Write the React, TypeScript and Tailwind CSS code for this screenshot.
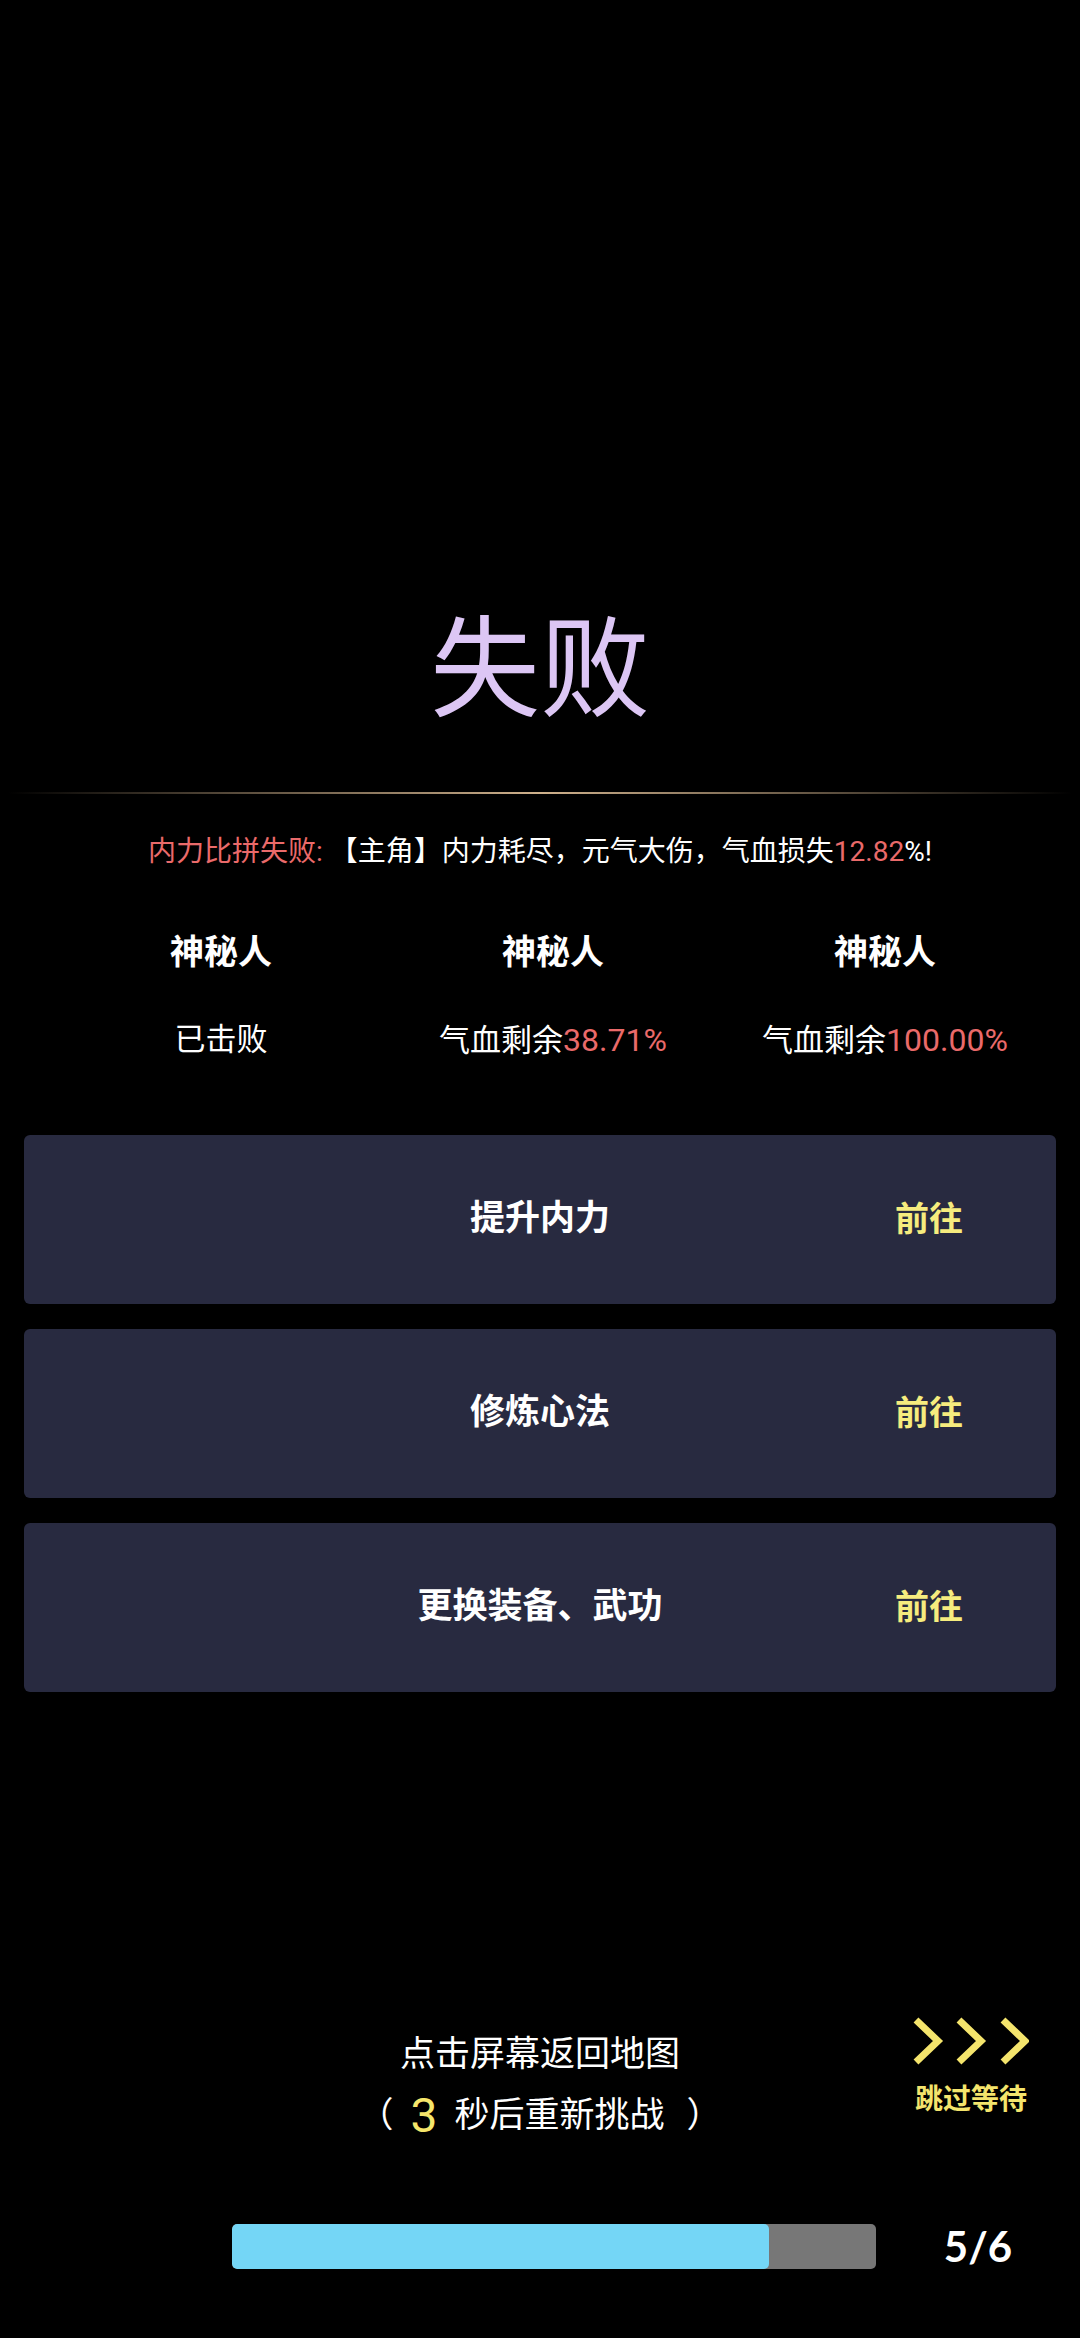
import React from "react";

const FONT = { fontFamily: 'Roboto, "Noto Sans CJK SC", "Noto Sans", sans-serif' };

function Chevrons() {
  return (
    <svg width="116" height="48" viewBox="0 0 116 48">
      {[0, 43, 87].map((x) => (
        <polyline
          key={x}
          points={`${x + 3},3 ${x + 25},24 ${x + 3},45`}
          fill="none"
          stroke="#f4e46c"
          strokeWidth="7"
          strokeLinecap="butt"
          strokeLinejoin="miter"
        />
      ))}
    </svg>
  );
}

function Card({ label }: { label: string }) {
  return (
    <div className="relative mx-[24px] h-[169px] rounded-[6px] bg-[#282a40] flex items-center justify-center">
      <span className="text-[35px] font-bold text-white">{label}</span>
      <span className="absolute left-[871px] text-[34px] font-bold text-[#f6ec7e]">前往</span>
    </div>
  );
}

export default function App() {
  return (
    <div className="w-[1080px] h-[2338px] bg-black flex flex-col overflow-hidden text-white" style={FONT}>
      <div className="pt-[616px] text-center text-[110px] leading-none text-[#dcc6f4]">失败</div>
      <div className="mt-[66px] h-[2px] mx-[8px] bg-gradient-to-r from-transparent via-[#cfb18c] to-transparent" />
      <div className="mt-[38px] h-[40px] leading-[40px] text-[28px] text-center">
        <span className="text-[#ea6a6a]">内力比拼失败: </span>
        <span className="text-white">【主角】内力耗尽，元气大伤，气血损失</span>
        <span className="text-[#ea6a6a]">12.82</span>
        <span className="text-white">%!</span>
      </div>
      <div className="mt-[56px] ml-[55px] grid grid-cols-[332px_332px_332px]">
        <div className="text-center text-[34px] font-bold leading-[48px]">神秘人</div>
        <div className="text-center text-[34px] font-bold leading-[48px]">神秘人</div>
        <div className="text-center text-[34px] font-bold leading-[48px]">神秘人</div>
        <div className="mt-[42px] text-center text-[31px] leading-[44px]">已击败</div>
        <div className="mt-[42px] text-center text-[31px] leading-[44px]">
          气血剩余<span className="text-[#ea6a6a] text-[32px]">38.71%</span>
        </div>
        <div className="mt-[42px] text-center text-[31px] leading-[44px]">
          气血剩余<span className="text-[#ea6a6a] text-[32px]">100.00%</span>
        </div>
      </div>
      <div className="mt-[72px] flex flex-col gap-[25px]">
        <Card label="提升内力" />
        <Card label="修炼心法" />
        <Card label="更换装备、武功" />
      </div>
      <div className="relative mt-[338px]">
        <div className="text-center text-[35px] leading-[50px]">点击屏幕返回地图</div>
        <div className="mt-[6px] h-[60px] flex items-center justify-center text-[35px]">
          <span>（</span>
          <span className="mx-[17px] text-[48px] text-[#f5e66b] leading-none">3</span>
          <span>秒后重新挑战</span>
          <span className="ml-[22px]">）</span>
        </div>
        <div className="absolute left-[913px] top-[-13px] flex flex-col items-center">
          <Chevrons />
          <div className="mt-[17px] text-[28px] font-bold leading-[36px] text-[#f4e46c]">跳过等待</div>
        </div>
      </div>
      <div className="mt-[69px] flex items-center pl-[232px]">
        <div className="w-[644px] h-[45px] rounded-[5px] bg-[#777777] overflow-hidden">
          <div className="h-full rounded-[5px] bg-[#74d6f6]" style={{ width: `${(5 / 6) * 100}%` }} />
        </div>
        <div className="flex-1 text-center text-[42px] font-bold" style={{ fontFamily: 'Lato, "Noto Sans", sans-serif' }}>
          5/6
        </div>
      </div>
    </div>
  );
}
